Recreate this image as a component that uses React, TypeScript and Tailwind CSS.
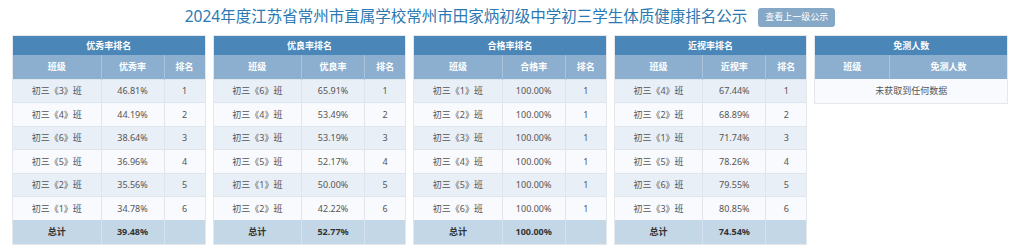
const font = { fontFamily: '"Noto Sans", "Noto Sans CJK SC", sans-serif' };

type Rank = { title: string; col: string; rows: [string, string, string][]; total: string };

const ranks: Rank[] = [
  {
    title: "优秀率排名",
    col: "优秀率",
    rows: [
      ["初三《3》班", "46.81%", "1"],
      ["初三《4》班", "44.19%", "2"],
      ["初三《6》班", "38.64%", "3"],
      ["初三《5》班", "36.96%", "4"],
      ["初三《2》班", "35.56%", "5"],
      ["初三《1》班", "34.78%", "6"],
    ],
    total: "39.48%",
  },
  {
    title: "优良率排名",
    col: "优良率",
    rows: [
      ["初三《6》班", "65.91%", "1"],
      ["初三《4》班", "53.49%", "2"],
      ["初三《3》班", "53.19%", "3"],
      ["初三《5》班", "52.17%", "4"],
      ["初三《1》班", "50.00%", "5"],
      ["初三《2》班", "42.22%", "6"],
    ],
    total: "52.77%",
  },
  {
    title: "合格率排名",
    col: "合格率",
    rows: [
      ["初三《1》班", "100.00%", "1"],
      ["初三《2》班", "100.00%", "1"],
      ["初三《3》班", "100.00%", "1"],
      ["初三《4》班", "100.00%", "1"],
      ["初三《5》班", "100.00%", "1"],
      ["初三《6》班", "100.00%", "1"],
    ],
    total: "100.00%",
  },
  {
    title: "近视率排名",
    col: "近视率",
    rows: [
      ["初三《4》班", "67.44%", "1"],
      ["初三《2》班", "68.89%", "2"],
      ["初三《1》班", "71.74%", "3"],
      ["初三《5》班", "78.26%", "4"],
      ["初三《6》班", "79.55%", "5"],
      ["初三《3》班", "80.85%", "6"],
    ],
    total: "74.54%",
  },
];

function RankTable({ data }: { data: Rank }) {
  return (
    <div className="border border-[#e4e8ec]">
      <table className="w-full table-fixed border-collapse text-center text-[9px]">
        <colgroup>
          <col className="w-[88px]" />
          <col className="w-[63px]" />
          <col />
        </colgroup>
        <thead>
          <tr className="h-[19px] bg-[#4a86b8] font-bold text-white">
            <th colSpan={3}>{data.title}</th>
          </tr>
          <tr className="h-[24px] bg-[#8cafd0] font-bold text-white">
            <th className="border-r border-[#a9c3dc]">班级</th>
            <th className="border-r border-[#a9c3dc]">{data.col}</th>
            <th>排名</th>
          </tr>
        </thead>
        <tbody className="text-[#555]">
          {data.rows.map((r, i) => (
            <tr
              key={i}
              className={`h-[23.5px] ${i % 2 === 0 ? "bg-[#e9eff7]" : "bg-[#f8fafd]"}`}
            >
              <td className="border-r border-t border-[#dfe5ec]">{r[0]}</td>
              <td className="border-r border-t border-[#dfe5ec]">{r[1]}</td>
              <td className="border-t border-[#dfe5ec]">{r[2]}</td>
            </tr>
          ))}
          <tr className="h-[24px] bg-[#c4d7e7] font-bold text-[#333]">
            <td className="border-r border-[#d6e2ed]">总计</td>
            <td className="border-r border-[#d6e2ed]">{data.total}</td>
            <td></td>
          </tr>
        </tbody>
      </table>
    </div>
  );
}

export default function App() {
  return (
    <div className="h-[251px] w-[1024px] bg-white pl-3 pr-4" style={font}>
      <div className="flex h-[35px] items-center justify-center gap-[11px] pb-[1px]">
        <h1 className="text-[15.5px] text-[#2b78b2]">
          2024年度江苏省常州市直属学校常州市田家炳初级中学初三学生体质健康排名公示
        </h1>
        <button className="h-[19px] rounded-[3px] bg-[#84a8c6] px-[7px] text-[9px] text-white">
          查看上一级公示
        </button>
      </div>
      <div className="grid grid-cols-5 items-start gap-[7px]">
        {ranks.map((r) => (
          <RankTable key={r.title} data={r} />
        ))}
        <div className="border border-[#e4e8ec]">
          <table className="w-full table-fixed border-collapse text-center text-[9px]">
            <colgroup>
              <col className="w-[74px]" />
              <col />
            </colgroup>
            <thead>
              <tr className="h-[19px] bg-[#4a86b8] font-bold text-white">
                <th colSpan={2}>免测人数</th>
              </tr>
              <tr className="h-[24px] bg-[#8cafd0] font-bold text-white">
                <th className="border-r border-[#a9c3dc]">班级</th>
                <th>免测人数</th>
              </tr>
            </thead>
            <tbody>
              <tr className="h-[23.5px] bg-[#f8fafd] text-[#555]">
                <td colSpan={2}>未获取到任何数据</td>
              </tr>
            </tbody>
          </table>
        </div>
      </div>
    </div>
  );
}
